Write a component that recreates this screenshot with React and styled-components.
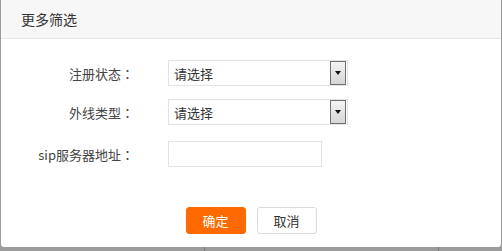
import React from 'react'
import styled, { createGlobalStyle } from 'styled-components'

const GlobalStyle = createGlobalStyle`
    html, body {
        margin: 0;
        padding: 0;
        background: #9b9b9b;
        font-family: "Noto Sans CJK SC", "Noto Sans", sans-serif;
    }
`

const Page = styled.div`
    width: 502px;
    height: 251px;
    overflow: hidden;
    position: relative;
    background: #9b9b9b;
`

// faint table column lines peeking out below the dialog
const Backdrop = styled.div`
    position: absolute;
    left: 0;
    right: 0;
    bottom: 0;
    height: 4px;
    display: grid;
    grid-template-columns: 204px 234px 1fr;
    div + div {
        border-left: 1px solid #7a7a7a;
    }
`

const Dialog = styled.section`
    position: relative;
    margin-left: 1px;
    width: 500px;
    height: 247px;
    background: #fff;
    border-radius: 0 0 3px 3px;
    display: flex;
    flex-direction: column;
`

const Header = styled.header`
    height: 38px;
    background: #f7f7f7;
    border-bottom: 1px solid #e6e6e6;
    display: flex;
    align-items: center;
    padding-left: 20px;
    font-size: 14px;
    color: #333;
`

const Form = styled.div`
    display: flex;
    flex-direction: column;
    padding-top: 21px;
`

const Row = styled.div`
    display: grid;
    grid-template-columns: 133px auto;
    column-gap: 34px;
    align-items: center;
    margin-top: ${({ gap }) => gap || 0}px;
`

const Label = styled.label`
    text-align: right;
    font-size: 13px;
    color: #444;
    white-space: nowrap;
`

// full-width colon sits centred in its cell, as in the reference
const Colon = styled.span`
    font-family: "Noto Sans CJK TC", "Noto Sans CJK SC", sans-serif;
`

const Select = styled.div`
    height: 24px;
    width: 173px;
    padding-left: 5px;
    border: 1px solid #e3e3e3;
    display: flex;
    align-items: center;
    justify-content: space-between;
    font-size: 13px;
    color: #333;
`

const Arrow = styled.span`
    width: 14px;
    height: 22px;
    margin-right: 1px;
    border: 1px solid #707070;
    background: linear-gradient(#f4f4f4, #d6d6d6);
    display: flex;
    align-items: center;
    justify-content: center;
    &::after {
        content: '';
        border-left: 3.5px solid transparent;
        border-right: 3.5px solid transparent;
        border-top: 4px solid #111;
    }
`

const Input = styled.div`
    width: 152px;
    height: 24px;
    border: 1px solid #e3e3e3;
`

const Footer = styled.div`
    display: flex;
    justify-content: center;
    gap: 11px;
    margin-top: 40px;
`

const Button = styled.button`
    width: 60px;
    height: 27px;
    border-radius: 3px;
    font-family: inherit;
    font-size: 13px;
    padding: 0;
    cursor: pointer;
    border: 1px solid ${({ primary }) => (primary ? '#ff6a00' : '#dcdcdc')};
    background: ${({ primary }) => (primary ? '#ff6a00' : '#fff')};
    color: ${({ primary }) => (primary ? '#fff' : '#333')};
`

const App = () => {
    return (
        <Page>
            <GlobalStyle />
            <Dialog>
                <Header>更多筛选</Header>
                <Form>
                    <Row>
                        <Label>注册状态<Colon>：</Colon></Label>
                        <Select>请选择<Arrow /></Select>
                    </Row>
                    <Row gap={13}>
                        <Label>外线类型<Colon>：</Colon></Label>
                        <Select>请选择<Arrow /></Select>
                    </Row>
                    <Row gap={16}>
                        <Label>sip服务器地址<Colon>：</Colon></Label>
                        <Input />
                    </Row>
                </Form>
                <Footer>
                    <Button primary>确定</Button>
                    <Button>取消</Button>
                </Footer>
            </Dialog>
            <Backdrop>
                <div />
                <div />
                <div />
            </Backdrop>
        </Page>
    )
}

export default App
